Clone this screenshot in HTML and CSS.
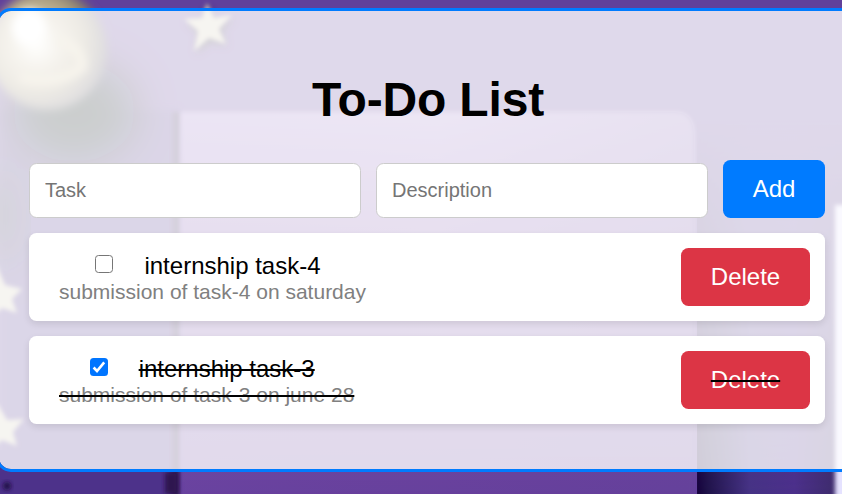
FILE: index.html
```html
<!DOCTYPE html>
<html lang="en">
<head>
<meta charset="utf-8">
<title>To-Do List</title>
<link rel="stylesheet" href="styles.css">
</head>
<body>
<svg class="backdrop" viewBox="0 0 842 494" preserveAspectRatio="none" aria-hidden="true">
  <defs>
    <filter id="b2" x="-30%" y="-30%" width="160%" height="160%"><feGaussianBlur stdDeviation="2"/></filter>
    <filter id="b5" x="-30%" y="-30%" width="160%" height="160%"><feGaussianBlur stdDeviation="4"/></filter>
    <filter id="b20" x="-60%" y="-60%" width="220%" height="220%"><feGaussianBlur stdDeviation="20"/></filter>
    <linearGradient id="book" x1="0" y1="0" x2="0" y2="1">
      <stop offset="0" stop-color="#a98cd0"/><stop offset=".3" stop-color="#8f68b8"/><stop offset=".7" stop-color="#7a55a6"/><stop offset="1" stop-color="#66409c"/>
    </linearGradient>
    <linearGradient id="bookShade"><stop offset="0" stop-color="#6e45aa" stop-opacity=".2"/><stop offset=".5" stop-color="#60389a" stop-opacity=".1"/><stop offset="1" stop-color="#604098" stop-opacity=".4"/></linearGradient>
    <linearGradient id="side"><stop offset="0" stop-color="#14003a"/><stop offset=".07" stop-color="#1e1248"/><stop offset=".35" stop-color="#453284"/><stop offset=".65" stop-color="#4b2f8a"/><stop offset="1" stop-color="#382a62"/></linearGradient>
    <linearGradient id="fade" x1="0" y1="0" x2="0" y2="1"><stop offset="0" stop-color="#000"/><stop offset=".35" stop-color="#777"/><stop offset="1" stop-color="#fff"/></linearGradient>
    <mask id="sideMask" maskUnits="userSpaceOnUse" x="690" y="120" width="160" height="380"><rect x="690" y="120" width="160" height="380" fill="url(#fade)"/></mask>
    <radialGradient id="pearl" cx=".4" cy=".45" r=".6">
      <stop offset="0" stop-color="#fffef8"/><stop offset=".35" stop-color="#cfc3a8"/><stop offset=".65" stop-color="#ac9f80"/><stop offset="1" stop-color="#5c5660"/>
    </radialGradient>
  </defs>
  <rect width="842" height="494" fill="#61409a"/>
  <rect y="110" width="178" height="384" fill="#4d328a" filter="url(#b5)"/>
  <rect y="450" width="178" height="44" fill="#4d328a"/>
  <ellipse cx="74" cy="112" rx="62" ry="50" fill="#00080c" filter="url(#b20)"/>
  <ellipse cx="0" cy="215" rx="14" ry="50" fill="#182028" filter="url(#b20)"/>
  <g mask="url(#sideMask)"><rect x="697" y="120" width="150" height="385" fill="url(#side)"/></g>
  <rect x="172" y="112" width="8" height="390" fill="#351b58" filter="url(#b2)"/>
  <path d="M181 112H675Q694 112 694 136V500H181Z" fill="url(#book)" filter="url(#b2)"/>
  <path d="M181 112H675Q694 112 694 136V500H181Z" fill="url(#bookShade)"/>
  <path d="M187 116V494" stroke="#3f236e" stroke-width="3" filter="url(#b2)"/>
  <rect x="165" y="472" width="13" height="22" fill="#2d144f" filter="url(#b2)"/>
  <ellipse cx="48" cy="50" rx="59" ry="60" fill="url(#pearl)" filter="url(#b5)"/>
  <ellipse cx="29" cy="27" rx="17" ry="18" fill="#fff" filter="url(#b5)"/>
  <path d="M58 40Q82 48 82 67Q56 86 20 77" fill="none" stroke="#d5c8a4" stroke-width="10" filter="url(#b5)"/>
  <path d="M207-8V18" stroke="#e5daf0" stroke-width="5" filter="url(#b2)"/>
  <path d="M208 8L215 22L234 18L221 32L227 46L211 42L196 54L199 34L186 22L203 21Z" fill="#2c2038" filter="url(#b5)"/>
  <g fill="#d2cbb8" filter="url(#b2)">
    <path d="M207 3L214 18L232 15L219 29L226 44L209 38L194 51L198 31L184 19L202 18Z"/>
    <path d="M-4 264L5 285L22 289L12 299L17 313L2 308L-12 321V285Z"/>
    <path d="M-3 403L7 420L24 419L13 432L17 446L2 440L-10 450V416Z"/>
  </g>
  <rect x="835" y="205" width="20" height="300" fill="#e5e2ff" filter="url(#b2)"/>
  <path d="M825 380H842" stroke="#5a5270" stroke-width="8" filter="url(#b5)"/>
  <circle cx="7" cy="486" r="4" fill="#211047" filter="url(#b2)"/>
</svg>
<main class="panel">
  <h1>To-Do List</h1>
  <form class="entry">
    <input class="field" type="text" placeholder="Task">
    <input class="field" type="text" placeholder="Description">
    <button class="btn add" type="button">Add</button>
  </form>
  <ul class="list">
    <li class="item">
      <div class="details">
        <label class="title"><span class="box"></span><span class="name">internship task-4</span></label>
        <span class="desc">submission of task-4 on saturday</span>
      </div>
      <button class="btn delete" type="button">Delete</button>
    </li>
    <li class="item done">
      <div class="details">
        <label class="title"><span class="box checked"><svg viewBox="0 0 18 18"><path d="M3.6 9.5L7 13L14.2 4.4" fill="none" stroke="#fff" stroke-width="2.6"/></svg></span><span class="name">internship task-3</span></label>
        <span class="desc">submission of task-3 on june 28</span>
      </div>
      <button class="btn delete" type="button">Delete</button>
    </li>
  </ul>
</main>
</body>
</html>
```
FILE: styles.css
```css
* { box-sizing: border-box; }
html { overflow: hidden; }
body {
  margin: 0;
  height: 494px;
  overflow: hidden;
  padding-top: 8px;
  font-family: "Liberation Sans", Arial, sans-serif;
  font-size: 24px;
  color: #000;
}
.backdrop {
  position: absolute;
  top: 0;
  left: 0;
  width: 842px;
  height: 494px;
  z-index: -1;
}
.panel {
  width: 862px;
  height: 464px;
  margin-left: -4px;
  padding: 30px;
  border: 3px solid #007bff;
  border-radius: 15px;
  background: rgba(255, 255, 255, 0.8);
  background-clip: padding-box;
}
h1 {
  margin: 31px 0 33px;
  padding-left: 2px;
  font-size: 48px;
  line-height: 55px;
  letter-spacing: -0.15px;
  text-align: center;
}
.entry {
  display: flex;
  align-items: flex-end;
  gap: 15px;
  margin: 0 0 15px;
}
.field {
  flex: 1;
  min-width: 0;
  height: 55px;
  padding: 0 15px;
  border: 1px solid #ccc;
  border-radius: 7.5px;
  background: #fff;
  font: 20px "Liberation Sans", Arial, sans-serif;
}
.field::placeholder { color: #757575; }
.btn {
  height: 58px;
  padding: 0;
  border: 0;
  border-radius: 7.5px;
  color: #fff;
  font: 24px "Liberation Sans", Arial, sans-serif;
}
.add { width: 102px; background: #007bff; }
.delete { width: 129px; background: #dc3545; }
.list { margin: 0; padding: 0; list-style: none; }
.item {
  display: flex;
  align-items: center;
  justify-content: space-between;
  height: 88px;
  margin-bottom: 15px;
  padding: 0 15px 0 30px;
  border-radius: 7.5px;
  background: #fff;
  box-shadow: 0 3px 7.5px rgba(0, 0, 0, 0.1);
}
.title {
  display: flex;
  justify-content: center;
  height: 27px;
  padding-right: 9px;
  line-height: 28px;
}
.box {
  width: 18px;
  height: 18px;
  margin: 3px 31px 0 0;
  border: 1.5px solid #767676;
  border-radius: 3.5px;
}
.checked { border: 0; background: #0075ff; }
.box svg { display: block; width: 18px; height: 18px; }
.desc {
  display: block;
  height: 24px;
  font-size: 21px;
  line-height: 25px;
  color: #808080;
}
.done .name,
.done .desc,
.done .delete {
  text-decoration: line-through #000 2px;
}
```
